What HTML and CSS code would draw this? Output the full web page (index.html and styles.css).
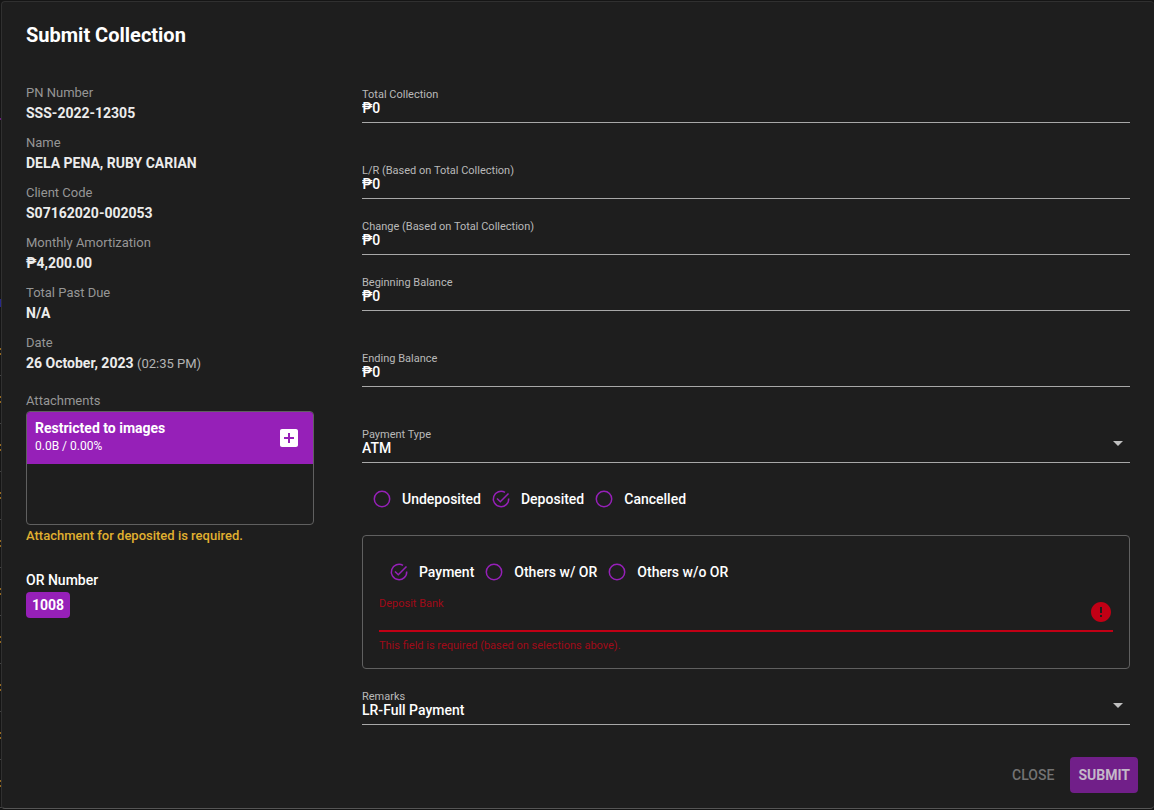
FILE: index.html
```
<!DOCTYPE html>
<html lang="en">
<head>
  <meta charset="UTF-8" />
  <meta name="viewport" content="width=device-width, initial-scale=1.0"/>
  <title>Submit Collection</title>
  <link rel="stylesheet" href="styles.css">
</head>
<body>

  <form class="dialog" id="collectionForm">
    <h1 class="title">Submit Collection</h1>

    <div class="content">
      <aside class="details">
        <dl class="info">
          <dt>PN Number</dt>
          <dd>SSS-2022-12305</dd>
          <dt>Name</dt>
          <dd>DELA PENA, RUBY CARIAN</dd>
          <dt>Client Code</dt>
          <dd>S07162020-002053</dd>
          <dt>Monthly Amortization</dt>
          <dd>₱4,200.00</dd>
          <dt>Total Past Due</dt>
          <dd>N/A</dd>
          <dt>Date</dt>
          <dd>26 October, 2023 <span class="time">(02:35 PM)</span></dd>
        </dl>

        <div class="attachments">
          <div class="caption">Attachments</div>
          <div class="uploader">
            <div class="uploader-header">
              <div>
                <div class="uploader-title">Restricted to images</div>
                <div class="uploader-size">0.0B / 0.00%</div>
              </div>
              <button type="button" class="add-btn" aria-label="Add file">
                <svg viewBox="0 0 24 24" width="24" height="24"><path fill="currentColor" d="M19 3H5c-1.110 0-2 .9-2 2v14c0 1.100.890 2 2 2h14c1.100 0 2-.9 2-2V5c0-1.100-.9-2-2-2zm-2 10h-4v4h-2v-4H7v-2h4V7h2v4h4v2z"/></svg>
              </button>
            </div>
            <div class="uploader-list"></div>
          </div>
          <div class="warning">Attachment for deposited is required.</div>
        </div>

        <div class="or-number">
          <div class="or-label">OR Number</div>
          <span class="badge">1008</span>
        </div>
      </aside>

      <section class="fields">
        <div class="field spaced">
          <label for="total">Total Collection</label>
          <input type="text" id="total" value="₱0" />
        </div>
        <div class="field">
          <label for="lr">L/R (Based on Total Collection)</label>
          <input type="text" id="lr" value="₱0" />
        </div>
        <div class="field">
          <label for="change">Change (Based on Total Collection)</label>
          <input type="text" id="change" value="₱0" />
        </div>
        <div class="field spaced">
          <label for="beginning">Beginning Balance</label>
          <input type="text" id="beginning" value="₱0" />
        </div>
        <div class="field spaced">
          <label for="ending">Ending Balance</label>
          <input type="text" id="ending" value="₱0" />
        </div>
        <div class="field select-field">
          <label for="paymentType">Payment Type</label>
          <select id="paymentType">
            <option>ATM</option>
          </select>
          <svg class="arrow" viewBox="0 0 24 24" width="24" height="24"><path fill="currentColor" d="M7 10l5 5 5-5z"/></svg>
        </div>

        <div class="radios status">
          <label class="radio"><input type="radio" name="status" />Undeposited</label>
          <label class="radio"><input type="radio" name="status" checked />Deposited</label>
          <label class="radio"><input type="radio" name="status" />Cancelled</label>
        </div>

        <div class="deposit">
          <div class="radios">
            <label class="radio"><input type="radio" name="purpose" checked />Payment</label>
            <label class="radio"><input type="radio" name="purpose" />Others w/ OR</label>
            <label class="radio"><input type="radio" name="purpose" />Others w/o OR</label>
          </div>
          <div class="field error">
            <label for="bank">Deposit Bank</label>
            <input type="text" id="bank" aria-describedby="bankError" />
            <svg class="error-icon" viewBox="0 0 24 24" width="24" height="24"><path fill="currentColor" d="M12 2C6.480 2 2 6.480 2 12s4.480 10 10 10 10-4.480 10-10S17.520 2 12 2zm1 15h-2v-2h2v2zm0-4h-2V7h2v6z"/></svg>
          </div>
          <div class="error-text" id="bankError">This field is required (based on selections above).</div>
        </div>

        <div class="field select-field">
          <label for="remarks">Remarks</label>
          <select id="remarks">
            <option>LR-Full Payment</option>
          </select>
          <svg class="arrow" viewBox="0 0 24 24" width="24" height="24"><path fill="currentColor" d="M7 10l5 5 5-5z"/></svg>
        </div>
      </section>
    </div>

    <div class="actions">
      <button type="button" class="btn close-btn">CLOSE</button>
      <button type="submit" class="btn submit-btn">SUBMIT</button>
    </div>
  </form>

</body>
</html>
```

FILE: styles.css
```
* {
  box-sizing: border-box;
}

/* page behind the dialog: table rows peek out on the left */
body {
  margin: 0;
  padding: 1px 0 1px 1px;
  min-height: 100vh;
  display: flex;
  font-family: Roboto, "Noto Sans", sans-serif;
  font-size: 14px;
  line-height: 20px;
  color: #fff;
  background-color: #151515;
  background-image:
    linear-gradient(#6a1b80, #6a1b80),
    linear-gradient(#27278a, #27278a),
    repeating-linear-gradient(transparent 0 20px, #96691f 20px 22px, transparent 22px 25px, #96691f 25px 27px, transparent 27px 47px, #444 47px 48px);
  background-size: 2px 2px, 2px 8px, 2px 480px;
  background-position: 0 118px, 0 299px, 0 328px;
  background-repeat: no-repeat;
}

.dialog {
  flex: 1;
  display: flex;
  flex-direction: column;
  padding: 23px 0 0;
  background: #1e1e1e;
  border: 1px solid #303030;
  border-right: 0;
  border-bottom-color: #555;
  border-radius: 4px;
}

.title {
  margin: 0 24px 38px;
  font-size: 20px;
  font-weight: bold;
  line-height: 20px;
}

.content {
  display: grid;
  grid-template-columns: 3fr 8fr;
  gap: 48px;
  padding: 0 24px;
}

.info {
  margin: 0;
  padding-bottom: 7px;
}

.info dt,
.caption {
  font-size: 13px;
  color: #969696;
}

.info dd {
  margin: 0 0 10px;
  font-weight: bold;
  color: #ececec;
}

.time {
  font-size: 13px;
  font-weight: normal;
  color: #b4b4b4;
}

.uploader {
  border: 1px solid #606060;
  border-radius: 4px;
  overflow: hidden;
}

.uploader-header {
  display: flex;
  justify-content: space-between;
  align-items: center;
  padding: 8px 12px 8px 8px;
  background: #9620b8;
}

.uploader-title {
  font-weight: bold;
  line-height: 16px;
}

.uploader-size {
  font-size: 12px;
  line-height: 20px;
}

.add-btn {
  display: flex;
  padding: 0;
  border: none;
  background: none;
  color: #fff;
  cursor: pointer;
}

.uploader-list {
  height: 60px;
}

.warning {
  padding-top: 1px;
  font-size: 13px;
  font-weight: 500;
  color: #e0b030;
}

.or-number {
  margin-top: 24px;
}

.or-label {
  font-weight: 500;
}

.badge {
  display: inline-block;
  margin-top: 2px;
  padding: 3px 6px;
  border-radius: 4px;
  background: #9620b8;
  font-weight: bold;
}

.fields {
  padding-top: 4px;
}

.field {
  position: relative;
  display: flex;
  flex-direction: column;
  margin-bottom: 20px;
  padding: 2px 0 6px;
  border-bottom: 1px solid #a8a8a8;
}

.field.spaced {
  margin-bottom: 40px;
}

.field label {
  font-size: 11px;
  line-height: 12px;
  color: #b9b9b9;
}

.field input,
.field select {
  width: 100%;
  height: 15px;
  margin: 0;
  padding: 0;
  border: none;
  outline: none;
  appearance: none;
  background: none;
  font: 500 14px/15px Roboto, "Noto Sans", sans-serif;
  color: #fff;
}

.field.select-field {
  margin-bottom: 0;
}

.arrow {
  position: absolute;
  right: 0;
  top: 4px;
  color: #c0c0c0;
  pointer-events: none;
}

.radios {
  display: flex;
  align-items: center;
  height: 40px;
  padding-left: 10px;
  gap: 10px;
}

.radios.status {
  height: 72px;
}

.radio {
  display: flex;
  align-items: center;
  gap: 10px;
  font-weight: 500;
}

.radio input {
  appearance: none;
  width: 20px;
  height: 20px;
  margin: 0;
  background: url("data:image/svg+xml,%3Csvg xmlns='http://www.w3.org/2000/svg' viewBox='0 0 20 20'%3E%3Ccircle cx='10' cy='10' r='7.700' fill='none' stroke='%239620b8' stroke-width='1.500'/%3E%3C/svg%3E");
}

.radio input:checked {
  background: url("data:image/svg+xml,%3Csvg xmlns='http://www.w3.org/2000/svg' viewBox='0 0 20 20' fill='none' stroke='%239620b8' stroke-width='1.500'%3E%3Cpath d='M14 3.400A7.700 7.700 0 1 0 17.700 9.500M6 9.500l3.300 3.300L17.500 4.500'/%3E%3C/svg%3E");
}

.deposit {
  margin-bottom: 20px;
  padding: 16px;
  border: 1px solid #606060;
  border-radius: 4px;
}

.field.error {
  margin-bottom: 8px;
  padding: 6px 0 5px;
  border-bottom: 2px solid #c10015;
}

.field.error label {
  color: #a00a18;
}

.error-icon {
  position: absolute;
  right: 0;
  top: 8px;
  color: #c10015;
}

.error-text {
  font-size: 11px;
  line-height: 12px;
  color: #a00a18;
}

.actions {
  display: flex;
  justify-content: flex-end;
  gap: 8px;
  margin-top: auto;
  padding: 32px 16px 15px;
}

.btn {
  height: 36px;
  padding: 0 8px;
  border: none;
  border-radius: 4px;
  font: 500 14px/20px Roboto, sans-serif;
  cursor: pointer;
}

.close-btn {
  background: none;
  color: #737373;
}

.submit-btn {
  background: #711f89;
  color: #c4b8c8;
  font-weight: bold;
}
```
